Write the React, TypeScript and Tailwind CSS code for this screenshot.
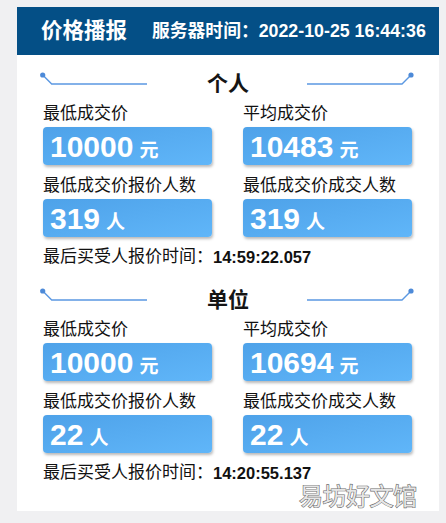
import React from 'react'

type Stat = { label: string; value: string; unit: string }

type Section = {
  title: string
  stats: Stat[]
  lastTime: string
}

const SECTIONS: Section[] = [
  {
    title: '个人',
    stats: [
      { label: '最低成交价', value: '10000', unit: '元' },
      { label: '平均成交价', value: '10483', unit: '元' },
      { label: '最低成交价报价人数', value: '319', unit: '人' },
      { label: '最低成交价成交人数', value: '319', unit: '人' },
    ],
    lastTime: '14:59:22.057',
  },
  {
    title: '单位',
    stats: [
      { label: '最低成交价', value: '10000', unit: '元' },
      { label: '平均成交价', value: '10694', unit: '元' },
      { label: '最低成交价报价人数', value: '22', unit: '人' },
      { label: '最低成交价成交人数', value: '22', unit: '人' },
    ],
    lastTime: '14:20:55.137',
  },
]

const FONT = "font-['Liberation_Sans','Noto_Sans_CJK_SC',sans-serif]"

// 見出し左右の飾り線
const LeftDeco = () => (
  <svg width="110" height="24" viewBox="0 0 110 24" className="shrink-0">
    <path d="M3.7 3 L12.7 12 L108 12" fill="none" stroke="#5b98e2" strokeWidth="1.4" />
    <circle cx="3.7" cy="3" r="2.6" fill="#4d8ad8" />
  </svg>
)

const RightDeco = () => (
  <svg width="110" height="24" viewBox="0 0 110 24" className="shrink-0">
    <path d="M0 12 L95 12 L104 3" fill="none" stroke="#5b98e2" strokeWidth="1.4" />
    <circle cx="104" cy="3" r="2.6" fill="#4d8ad8" />
  </svg>
)

const StatBox = ({ stat }: { stat: Stat }) => (
  <div className="flex flex-col">
    <div className="text-[17px] leading-[24px] text-[#111]">{stat.label}</div>
    <div className="mt-[1px] flex h-[38px] items-baseline rounded-[4px] bg-gradient-to-br from-[#4ea2e9] to-[#60b6f9] pl-[7px] pt-[2px] text-white shadow-[1px_2px_3px_rgba(0,0,0,0.28)]">
      <span className="text-[30px] font-bold leading-[36px]">{stat.value}</span>
      <span className="ml-[6px] text-[19px] font-bold">{stat.unit}</span>
    </div>
  </div>
)

const SectionBlock = ({ section }: { section: Section }) => (
  <div className="flex flex-col">
    <div className="flex h-[32px] items-center justify-between px-[22px]">
      <LeftDeco />
      <span className="text-[21px] font-bold text-[#151515]">{section.title}</span>
      <RightDeco />
    </div>
    <div className="mt-[2px] grid grid-cols-[169px_169px] gap-x-[31px] gap-y-[9px] px-[26px]">
      {section.stats.map((s, i) => (
        <StatBox key={i} stat={s} />
      ))}
    </div>
    <div className="mt-[8px] flex items-center px-[26px] text-[17px] leading-[24px] text-[#111]">
      <span>最后买受人报价时间：</span>
      <span className="text-[16.5px] font-bold">{section.lastTime}</span>
    </div>
  </div>
)

export default function App() {
  return (
    <div className={`min-h-screen bg-[#f0f0f2] pt-[7px] ${FONT}`}>
      <div className="relative ml-[17px] w-[422px] bg-white pb-[26px]">
        <div className="flex h-[48px] items-center bg-[#044f86] pl-[24px] text-white">
          <span className="text-[21.5px] font-bold">价格播报</span>
          <span className="ml-[25px] text-[17.8px] font-bold">服务器时间：2022-10-25 16:44:36</span>
        </div>
        <div className="flex flex-col gap-[15px] pt-[13px]">
          {SECTIONS.map((s) => (
            <SectionBlock key={s.title} section={s} />
          ))}
        </div>
        {/* 透かし */}
        <div className="pointer-events-none absolute left-[282px] top-[472px] text-[24px] tracking-[-0.5px] text-[#e6e6e6] [-webkit-text-stroke:1.2px_#6b6b6b] [paint-order:stroke_fill]">
          易坊好文馆
        </div>
      </div>
    </div>
  )
}
